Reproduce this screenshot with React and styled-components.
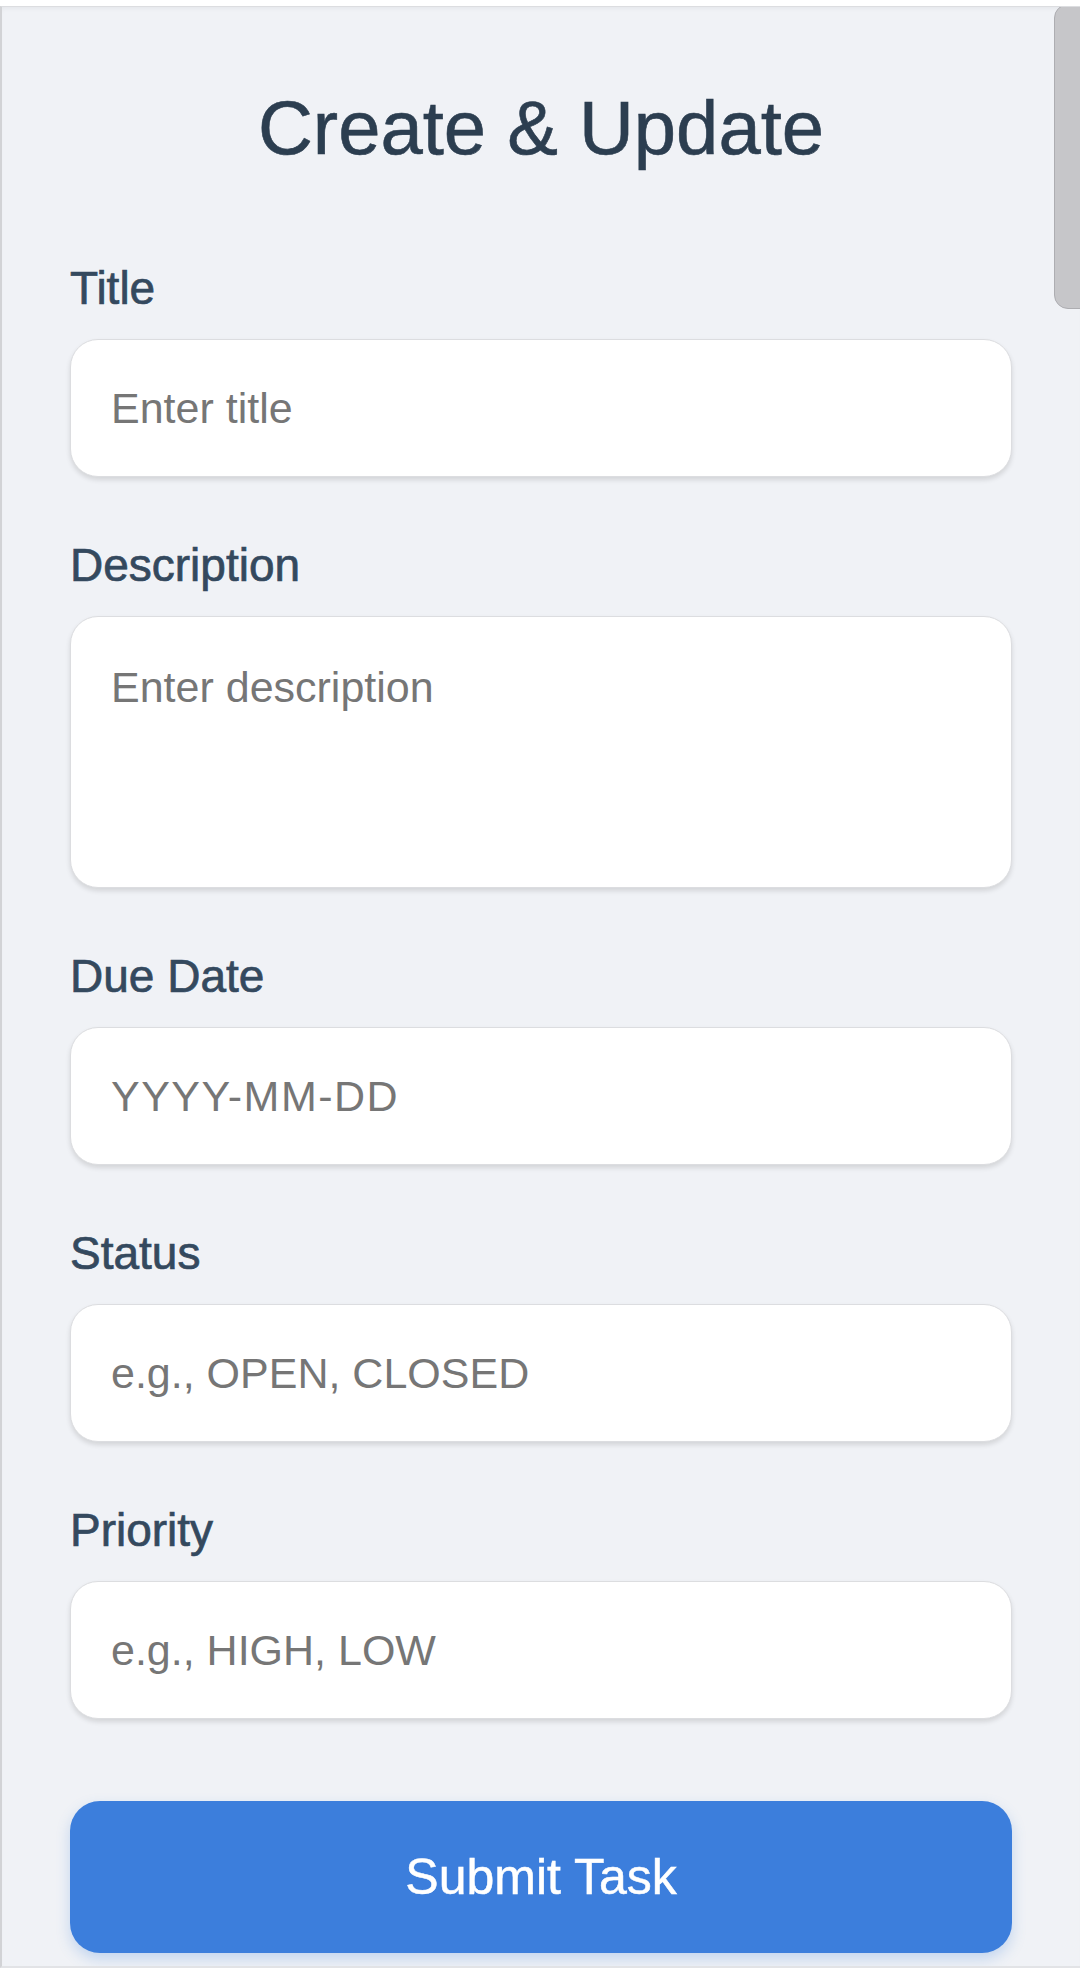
import React from "react";
import styled, { createGlobalStyle } from "styled-components";

const Global = createGlobalStyle`
  html, body { margin: 0; padding: 0; background: #ffffff; }
  body { font-family: "Liberation Sans", Arial, sans-serif; }
  * { box-sizing: border-box; }
`;

const Screen = styled.div`
  position: relative;
  margin-top: 6px;
  height: 1962px;
  background: #f0f2f6;
  border-top: 1px solid #dcdde0;
  border-left: 2px solid #d2d3d6;
  border-bottom: 2px solid #e2e3e6;
  box-shadow: inset 0 4px 6px -4px rgba(0, 0, 0, 0.08);
  overflow: hidden;
`;

const Scrollbar = styled.div`
  position: absolute;
  top: -3px;
  right: -14px;
  width: 40px;
  height: 305px;
  border-radius: 14px;
  background: #c6c6c9;
  border: 1px solid #adadb1;
`;

const Form = styled.form`
  display: flex;
  flex-direction: column;
  padding: 75px 68px 0 68px;
`;

const Heading = styled.h1`
  margin: 0 0 89px 0;
  text-align: center;
  font-family: "Liberation Sans", Arial, sans-serif;
  font-size: 76px;
  font-weight: 400;
  line-height: 91px;
  color: #2c3e50;
  -webkit-text-stroke: 0.6px #2c3e50;
`;

const Field = styled.div`
  display: flex;
  flex-direction: column;
  gap: 25px;
  margin-bottom: ${(p) => (p.$last ? "82px" : "62px")};
`;

const Label = styled.label`
  font-family: "Liberation Sans", Arial, sans-serif;
  font-size: 46px;
  line-height: 52px;
  color: #34495e;
  -webkit-text-stroke: 0.7px #34495e;
`;

const boxStyles = `
  width: 100%;
  background: #ffffff;
  border: 1.5px solid #dcdde0;
  border-radius: 28px;
  box-shadow: 0 3px 5px rgba(0, 0, 0, 0.12);
  font-family: "Liberation Sans", Arial, sans-serif;
  font-size: 43px;
  color: #333;
  outline: none;
  &::placeholder { color: #767676; opacity: 1; }
`;

const TextInput = styled.input`
  ${boxStyles}
  height: 138px;
  padding: 0 40px;
  letter-spacing: ${(p) => (p.$wide ? "1.5px" : "0")};
`;

const TextArea = styled.textarea`
  ${boxStyles}
  height: 272px;
  padding: 45px 40px 40px 40px;
  line-height: 50px;
  resize: none;
`;

const SubmitButton = styled.button`
  height: 152px;
  width: 100%;
  border: none;
  border-radius: 30px;
  background: #3c7edc;
  box-shadow: 0 6px 14px rgba(60, 126, 220, 0.25);
  color: #ffffff;
  font-family: "Liberation Sans", Arial, sans-serif;
  font-size: 50px;
  -webkit-text-stroke: 0.5px #ffffff;
  cursor: pointer;
`;

const fields = [
  { label: "Title", placeholder: "Enter title" },
  { label: "Description", placeholder: "Enter description", multi: true },
  { label: "Due Date", placeholder: "YYYY-MM-DD", wide: true },
  { label: "Status", placeholder: "e.g., OPEN, CLOSED" },
  { label: "Priority", placeholder: "e.g., HIGH, LOW" },
];

export default function App() {
  return (
    <>
      <Global />
      <Screen>
        <Scrollbar />
        <Form onSubmit={(e) => e.preventDefault()}>
          <Heading>Create &amp; Update</Heading>
          {fields.map((f, i) => (
            <Field key={f.label} $last={i === fields.length - 1}>
              <Label>{f.label}</Label>
              {f.multi ? (
                <TextArea placeholder={f.placeholder} />
              ) : (
                <TextInput placeholder={f.placeholder} $wide={f.wide} />
              )}
            </Field>
          ))}
          <SubmitButton type="submit">Submit Task</SubmitButton>
        </Form>
      </Screen>
    </>
  );
}
